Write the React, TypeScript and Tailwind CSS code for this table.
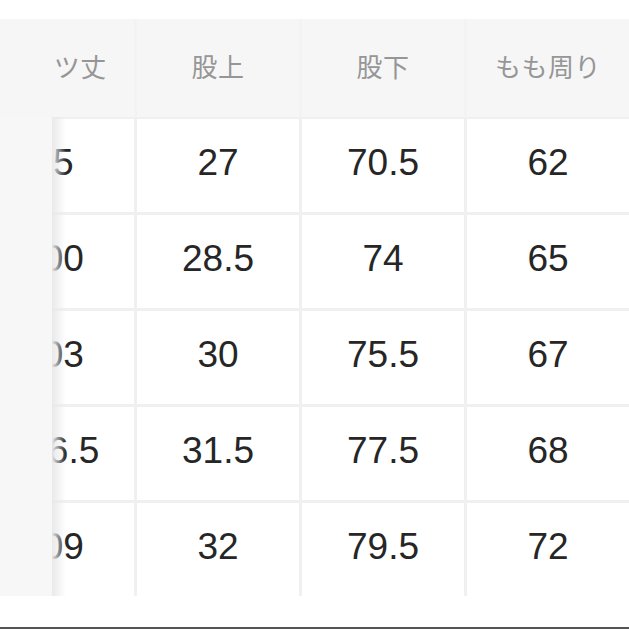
const columns = ["パンツ丈", "股上", "股下", "もも周り"];

const rows = [
  ["95", "27", "70.5", "62"],
  ["100", "28.5", "74", "65"],
  ["103", "30", "75.5", "67"],
  ["106.5", "31.5", "77.5", "68"],
  ["109", "32", "79.5", "72"],
];

export default function App() {
  return (
    <div
      className="w-[629px] h-[629px] bg-white overflow-hidden flex flex-col"
      style={{ fontFamily: '"Liberation Sans", "Noto Sans CJK JP", sans-serif' }}
    >
      <div className="pt-[19px] relative overflow-hidden">
        <div className="ml-[-28px] w-max flex flex-col">
          {/* header */}
          <div className="flex gap-[3px] bg-[#f3f3f3]">
            {columns.map((c) => (
              <div
                key={c}
                className="w-[162px] h-[98px] bg-[#f6f6f6] flex items-center justify-center text-[26px] text-[#969696] tracking-[0.5px]"
              >
                {c}
              </div>
            ))}
          </div>
          {/* body */}
          <div className="flex flex-col gap-[3px] pt-[2px] bg-[#f0f0f0]">
            {rows.map((r, i) => (
              <div key={i} className="flex gap-[3px]">
                {r.map((v, j) => (
                  <div
                    key={j}
                    className="w-[162px] h-[93px] bg-white flex items-center justify-center pb-[5px] text-[37px] text-[#262626]"
                  >
                    {v}
                  </div>
                ))}
              </div>
            ))}
          </div>
        </div>
        {/* sticky first column */}
        <div className="absolute left-0 top-[19px] h-[98px] w-[53px] bg-[#f6f6f6]" />
        <div className="absolute left-0 top-[117px] bottom-0 w-[52px] bg-[#f7f7f7]" />
        <div className="absolute left-[52px] top-[117px] bottom-0 w-[14px] bg-gradient-to-r from-[#e9e9e9] to-transparent" />
      </div>
      <div className="flex-1" />
      <div className="h-[2px] bg-[#555555]" />
    </div>
  );
}
